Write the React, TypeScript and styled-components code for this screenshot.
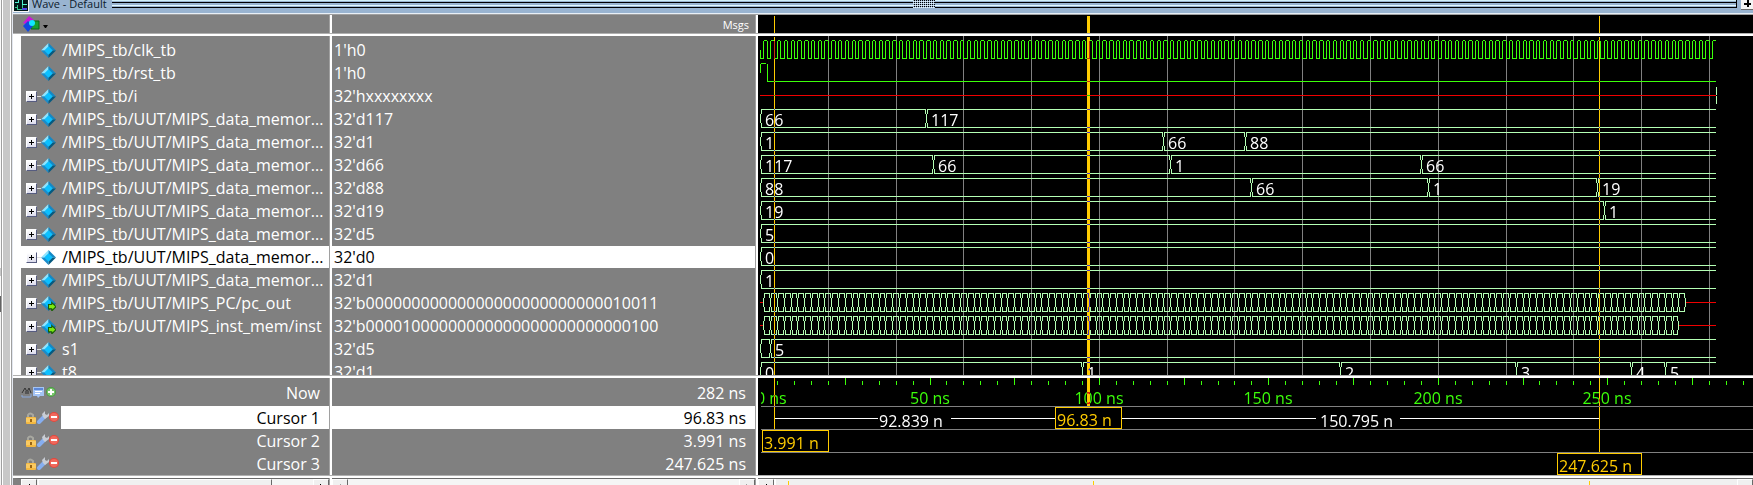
import React from "react";
import styled, { createGlobalStyle } from "styled-components";

const GREEN = "#3cff0a";
const BUS = "#b4ffb4";
const AMBER = "#ffcc00";
const GREY = "#808080";
const FONT = '"Open Sans", "Noto Sans", sans-serif';

const GlobalStyle = createGlobalStyle`
  * { box-sizing: border-box; }
  body { margin: 0; background: #fff; font-family: ${FONT}; }
  button { flex: none; font: inherit; padding: 0; border: 0; background: none; display: flex; align-items: center; justify-content: center; }
  svg { flex: none; }
  ul { margin: 0; padding: 0; list-style: none; }
`;

/* ---------- data ---------- */

type Change = [time: number, value: string];
type Signal = {
  name: string;
  value: string;
  kind: "clock" | "reset" | "unknown" | "bus" | "stream";
  leaf?: boolean;
  port?: boolean;
  selected?: boolean;
  changes?: Change[];
  until?: number;
};

const memory = "/MIPS_tb/UUT/MIPS_data_memor...";

const signals: Signal[] = [
  { name: "/MIPS_tb/clk_tb", value: "1'h0", kind: "clock", leaf: true },
  { name: "/MIPS_tb/rst_tb", value: "1'h0", kind: "reset", leaf: true },
  { name: "/MIPS_tb/i", value: "32'hxxxxxxxx", kind: "unknown" },
  { name: memory, value: "32'd117", kind: "bus", changes: [[0, "66"], [49, "117"]] },
  { name: memory, value: "32'd1", kind: "bus", changes: [[0, "1"], [119, "66"], [143, "88"]] },
  { name: memory, value: "32'd66", kind: "bus", changes: [[0, "117"], [51, "66"], [121, "1"], [195, "66"]] },
  { name: memory, value: "32'd88", kind: "bus", changes: [[0, "88"], [145, "66"], [197, "1"], [247, "19"]] },
  { name: memory, value: "32'd19", kind: "bus", changes: [[0, "19"], [249, "1"]] },
  { name: memory, value: "32'd5", kind: "bus", changes: [[0, "5"]] },
  { name: memory, value: "32'd0", kind: "bus", selected: true, changes: [[0, "0"]] },
  { name: memory, value: "32'd1", kind: "bus", changes: [[0, "1"]] },
  { name: "/MIPS_tb/UUT/MIPS_PC/pc_out", value: "32'b00000000000000000000000000010011", kind: "stream", port: true, until: 273 },
  { name: "/MIPS_tb/UUT/MIPS_inst_mem/inst", value: "32'b00001000000000000000000000000100", kind: "stream", port: true, until: 271 },
  { name: "s1", value: "32'd5", kind: "bus", changes: [[0, ""], [3, "5"]] },
  { name: "t8", value: "32'd1", kind: "bus", changes: [[0, "0"], [95, "1"], [171, "2"], [223, "3"], [257, "4"], [267, "5"]] },
];

const cursors = [
  { name: "Cursor 1", value: "96.83 ns", selected: true },
  { name: "Cursor 2", value: "3.991 ns", selected: false },
  { name: "Cursor 3", value: "247.625 ns", selected: false },
];

const END = 282;
const ROW = 23;
const toX = (ns: number) => Math.floor(2.6 + ns * 3.3885);

/* One-pixel horizontal and vertical runs, as filled path segments. */
const across = (x: number, y: number, w: number) => `M${x} ${y}h${w}v1h${-w}z`;
const down = (x: number, y: number, h: number) => `M${x} ${y}h1v${h}h-1z`;

/* ---------- layout ---------- */

const Screen = styled.div`
  display: flex;
  height: 100vh;
  overflow: hidden;
`;

const Gutter = styled.div`
  flex: 0 0 13px;
  display: grid;
  grid-template-columns: 1px 1px 1px 7px 1px 1px 1px;
`;
const Stripe = styled.div<{ $tone: string }>`
  background: ${(p) => p.$tone};
`;
const Neighbour = styled.div`
  display: flex;
  flex-direction: column;
  background: #f4f4f4;
`;
const NeighbourPart = styled.div<{ $size: number; $tone: string }>`
  flex: 0 0 ${(p) => p.$size}px;
  background: ${(p) => p.$tone};
`;

const Window = styled.main`
  flex: 1;
  min-width: 0;
  display: flex;
  flex-direction: column;
`;

const TitleBar = styled.header`
  flex: 0 0 15px;
  display: flex;
  align-items: flex-start;
  background: #99b4d1;
  border-bottom: 1px solid #a0a0a0;
  box-shadow: inset 0 -1px #e8f0f8;
  overflow: hidden;
`;
const Title = styled.h1`
  margin: 0 6px 0 3px;
  width: 74px;
  height: 13px;
  font-size: 11px;
  font-weight: 400;
  line-height: 7px;
  color: #0c1a2c;
  white-space: nowrap;
`;
const Grip = styled.div`
  flex: 1;
  height: 8px;
  background: linear-gradient(
    #d2f0f8 0 1px, #99b4d1 1px 2px, #000 2px 3px, #99b4d1 3px 5px,
    #e4fbff 5px 6px, #99b4d1 6px 7px, #000 7px 8px
  );
  border-right: 1px solid #000;
  display: flex;
  justify-content: center;
`;
const GripDots = styled.div`
  width: 22px;
  height: 8px;
  background: conic-gradient(#000 25%, #b4cce4 0 50%, #e4f4fc 0 75%, #99b4d1 0) 0 0 / 2px 2px;
`;
const PlusButton = styled.button`
  width: 12px;
  height: 10px;
  margin-left: 4px;
  background: #f4f4f4 !important;
  border-bottom: 1px solid #696969 !important;
`;

const Columns = styled.div<{ $grow?: boolean; $size?: number }>`
  flex: ${(p) => (p.$grow ? "1 1 0" : `0 0 ${p.$size}px`)};
  min-height: 0;
  display: grid;
  grid-template-columns: 316px 3px 423px 3px minmax(0, 1fr);
  grid-template-rows: minmax(0, 1fr);
  overflow: hidden;
`;
const Sash = styled.div`
  background: linear-gradient(to right, #a0a0a0 0 1px, #fff 1px 3px);
`;
const Splitter = styled.div`
  flex: 0 0 3px;
  background: linear-gradient(#b0b0b0 0 1px, #fff 1px 3px);
`;
const Pane = styled.section<{ $indent?: boolean }>`
  background: ${GREY};
  overflow: hidden;
  border-left: ${(p) => (p.$indent ? "8px solid #fff" : "0")};
`;
const ListPane = styled(Pane)`
  padding-top: 3px;
`;
const Plot = styled.div`
  background: #000;
  overflow: hidden;
  isolation: isolate;
`;
const Drawing = styled.svg`
  display: block;
  font-family: ${FONT};
  font-size: 16px;
`;
const CursorBar = styled.rect`
  mix-blend-mode: difference;
`;

const HeaderNames = styled(Pane)`
  display: flex;
  align-items: center;
  padding-left: 10px;
`;
const HeaderMessages = styled(Pane)`
  text-align: right;
  padding-right: 6px;
  font-size: 11px;
  line-height: 20px;
  color: #fff;
`;

const SignalRow = styled.li<{ $selected?: boolean }>`
  display: flex;
  align-items: center;
  height: ${ROW}px;
  padding-left: 5px;
  border-bottom: 1px solid ${GREY};
  background: ${(p) => (p.$selected ? "#fff" : GREY)};
  color: ${(p) => (p.$selected ? "#000" : "#fff")};
`;
const ToggleSlot = styled.div`
  width: 15px;
  height: 11px;
  display: flex;
  align-items: center;
`;
const Toggle = styled.button`
  width: 11px;
  height: 11px;
  background: linear-gradient(#fff, #dcdcec) !important;
  border: 1px solid #fff !important;
  border-right-color: #565c80 !important;
  border-bottom-color: #565c80 !important;
`;
const Branch = styled.div`
  flex: 1;
  height: 1px;
  background: #dcdcdc;
`;
const SignalName = styled.span`
  flex: 1;
  margin-left: 6px;
  font-size: 16px;
  line-height: 22px;
  white-space: nowrap;
`;
const ValueRow = styled.li<{ $selected?: boolean }>`
  height: ${ROW}px;
  padding-left: 2px;
  border-bottom: 1px solid ${GREY};
  background: ${(p) => (p.$selected ? "#fff" : GREY)};
  color: ${(p) => (p.$selected ? "#000" : "#fff")};
  font-size: 16px;
  line-height: 22px;
  white-space: nowrap;
`;

const FooterRow = styled.div<{ $size: number }>`
  display: flex;
  align-items: center;
  height: ${(p) => p.$size}px;
`;
const Tools = styled.div<{ $now?: boolean }>`
  width: 48px;
  padding-left: ${(p) => (p.$now ? 8 : 11)}px;
  display: flex;
`;
const FooterText = styled.div<{ $selected?: boolean }>`
  flex: 1;
  align-self: stretch;
  display: flex;
  align-items: center;
  justify-content: flex-end;
  padding: 1px 9px 0;
  background: ${(p) => (p.$selected ? "#fff" : GREY)};
  color: ${(p) => (p.$selected ? "#000" : "#fff")};
  font-size: 16px;
  line-height: 22px;
`;

const ScrollBar = styled.div<{ $inset?: boolean }>`
  display: flex;
  border-top: 1px solid #696969;
  border-left: ${(p) => (p.$inset ? `8px solid ${GREY}` : "0")};
  background: #f5f5f5;
  overflow: hidden;
`;
const ScrollButton = styled.button`
  width: 16px;
  height: 17px;
  background: #f0f0f0 !important;
  border: 1px solid #fff !important;
  border-right: 1px solid #696969 !important;
`;
const Thumb = styled.div<{ $width: number }>`
  width: ${(p) => p.$width}px;
  height: 17px;
  margin-left: 1px;
  background: #f0f0f0;
  border: 1px solid #fff;
  border-right: 1px solid #696969;
`;
const Track = styled.div`
  flex: 1;
  height: 17px;
`;
const Overview = styled.div`
  flex: 1;
  min-width: 0;
  background: #f0f0f0;
  border-left: 2px solid #fff;
  overflow: hidden;
`;

/* ---------- icons ---------- */

const Diamond = ({ port }: { port?: boolean }) => (
  <svg width="15" height="15" viewBox="0 0 14 14" aria-hidden="true">
    <path d="M7 0 0 7h7z" fill="#8fe4ff" />
    <path d="M7 0l7 7H7z" fill="#1488c4" />
    <path d="M0 7l7 7V7z" fill="#1a8ccc" />
    <path d="M14 7l-7 7V7z" fill="#065a80" />
    <path d="M7 3l4 4-4 4-4-4z" fill="#0cc0ff" />
    {port && <path d="M7 8h3V6l4 4-4 4v-2H7z" fill="#7bea10" stroke="#185c08" strokeWidth="1" />}
  </svg>
);

const Plus = () => (
  <svg width="5" height="5" viewBox="0 0 5 5" shapeRendering="crispEdges" aria-hidden="true">
    <path d="M0 2h5v1H0zM2 0h1v5H2z" fill="#000" />
  </svg>
);

const BoldPlus = () => (
  <svg width="9" height="9" viewBox="0 0 9 9" shapeRendering="crispEdges" aria-hidden="true">
    <path d="M1 3h7v2H1zM4 0h2v7H4z" fill="#000" />
  </svg>
);

const WindowIcon = () => (
  <svg width="16" height="12" viewBox="0 0 16 12" shapeRendering="crispEdges" aria-hidden="true">
    <path d="M0 0h16v12H0z" fill="#f4f4f4" />
    <path d="M1 0h14v11H1z" fill="#001818" />
    <path d="M2 2h3v1H2zM5 0h1v3H5zM9 0h1v4h4v1H9z" fill="#50f0d0" />
    <path d="M2 7h2v1H2zM4 5h1v5H4zM5 9h4v1H5zM9 5h1v5H9z" fill="#38c890" />
    <path d="M9 8h5v2h-5z" fill="#5048e8" />
  </svg>
);

const ShapesIcon = () => (
  <svg width="32" height="17" viewBox="0 0 32 17" aria-hidden="true">
    <path d="M0 7 6 0l5 4-5 5z" fill="#c818d8" />
    <path d="M8 5h8v8H8z" fill="#18a030" stroke="#0a6418" />
    <path d="M5 5l5 5-5 6-5-6z" fill="#1248e0" />
    <circle cx="9" cy="7" r="3" fill="#10e8ff" />
    <path d="M20 9h5l-2 3h-1z" fill="#000" />
  </svg>
);

const LockIcon = () => (
  <svg width="13" height="13" viewBox="0 0 13 13" aria-hidden="true">
    <path d="M4 6V4q2-3 5 0v2" fill="none" stroke="#a8a8a0" strokeWidth="2" />
    <rect x="2" y="6" width="10" height="7" rx="1" fill="#f4b840" />
    <path d="M2 8h10M2 10h10" stroke="#ffdc84" />
    <path d="M6 8h2v3H6z" fill="#986414" />
  </svg>
);
const WrenchIcon = () => (
  <svg width="12" height="13" viewBox="0 0 12 13" aria-hidden="true">
    <path d="M2 11l5-5" stroke="#86aef0" strokeWidth="4" strokeLinecap="round" />
    <path d="M6 6 5 3l3-3v3l2 1 2-2v3L8 8z" fill="#c8ccd4" />
  </svg>
);
const RemoveIcon = () => (
  <svg width="11" height="12" viewBox="0 0 11 12" aria-hidden="true">
    <circle cx="5" cy="5" r="5" fill="#e4483c" />
    <circle cx="5" cy="5" r="4" fill="#f0685c" />
    <path d="M2 4h6v2H2z" fill="#fff" />
  </svg>
);
const GridIcon = () => (
  <svg width="12" height="11" viewBox="0 0 12 11" aria-hidden="true">
    <path d="M1 6l3-5 2 4 2-4 2 5" fill="none" stroke="#333" strokeWidth="1" />
    <path d="M4 4h4v3H4z" fill="#555" />
    <path d="M1 8v2h9V7" fill="none" stroke="#88a8dc" />
  </svg>
);
const SheetIcon = () => (
  <svg width="13" height="11" viewBox="0 0 13 11" aria-hidden="true">
    <path d="M0 0h11v9H7l-2 2-1-2H0z" fill="#a4c4f4" />
    <path d="M1 1h9v2H1z" fill="#5c88d8" />
    <path d="M2 4h7v1H2zM2 6h5v1H2z" fill="#fff" />
  </svg>
);
const AddIcon = () => (
  <svg width="11" height="11" viewBox="0 0 11 11" aria-hidden="true">
    <circle cx="5" cy="5" r="5" fill="#4c9c44" />
    <circle cx="5" cy="5" r="4" fill="#78c46c" />
    <path d="M4 2h2v2h2v2H6v2H4V6H2V4h2z" fill="#fff" />
  </svg>
);
const Arrow = ({ left, muted }: { left?: boolean; muted?: boolean }) => (
  <svg width="8" height="9" viewBox="0 0 8 9" shapeRendering="crispEdges" aria-hidden="true">
    <path d={left ? "M5 1v7L1 4z" : "M3 1v7l4-4z"} fill={muted ? "#a0a0a0" : "#000"} />
  </svg>
);

/* ---------- waveforms ---------- */

const clockPath = (t: number) => {
  let d = down(toX(0), t + 11, 8);
  for (let ns = 0; ns < END; ns += 2) {
    const low = toX(ns);
    const rise = toX(ns + 1);
    const fall = toX(ns + 2);
    d += across(low, t + 19, rise - low + 1);
    d += down(rise, t + 2, 17);
    d += across(rise + 1, t + 1, fall - rise - 1);
    if (ns + 2 < END) d += down(fall, t + 2, 17);
  }
  return d;
};

const resetPath = (t: number) =>
  down(toX(0), t + 2, 9) +
  across(toX(0) + 1, t + 1, 5) +
  down(toX(2), t + 2, 18) +
  across(toX(2), t + 19, toX(END) - toX(2));

const edge = (x: number, t: number, left: boolean, right: boolean) => {
  let d = down(x, t + 6, 9);
  if (left) d += down(x - 1, t + 1, 5) + down(x - 1, t + 15, 5);
  if (right) d += down(x + 1, t + 1, 5) + down(x + 1, t + 15, 5);
  return d;
};

const busPath = (t: number, times: number[], end: number, closed: boolean) => {
  let d = "";
  times.forEach((ns, i) => {
    const from = toX(ns);
    const last = i === times.length - 1;
    const to = last ? toX(end) : toX(times[i + 1]);
    d += edge(from, t, i > 0, true);
    d += across(from + 1, t + 1, to - from - 1) + across(from + 1, t + 19, to - from - 1);
  });
  if (closed) d += edge(toX(end), t, true, false);
  return d;
};

const Wave = ({ signal, t }: { signal: Signal; t: number }) => {
  if (signal.kind === "clock") return <path d={clockPath(t)} fill={GREEN} />;
  if (signal.kind === "reset") return <path d={resetPath(t)} fill={GREEN} />;
  if (signal.kind === "unknown")
    return (
      <g>
        <path d={across(toX(0), t + 10, toX(END) - toX(0))} fill="#f00000" />
        <path d={down(toX(END), t + 2, 8) + down(toX(END), t + 11, 8)} fill={BUS} />
      </g>
    );
  if (signal.kind === "stream") {
    const until = signal.until ?? END;
    const times: number[] = [];
    for (let ns = 1; ns < until; ns += 2) times.push(ns);
    return (
      <g>
        <path
          d={across(toX(0), t + 10, 3) + across(toX(until), t + 10, toX(END) - toX(until))}
          fill="#f00000"
        />
        <path d={busPath(t, times, until, true)} fill={BUS} />
      </g>
    );
  }
  const changes = signal.changes ?? [];
  return (
    <g>
      <path d={busPath(t, changes.map((c) => c[0]), END, false)} fill={BUS} />
      {changes.map(([ns, label]) => (
        <text key={ns} x={toX(ns) + 5} y={t + 18} fill="#fff">
          {label}
        </text>
      ))}
    </g>
  );
};

const bars = [
  { x: 16, w: 1, foot: 51 },
  { x: 329, w: 3, foot: 28 },
  { x: 841, w: 1, foot: 74 },
];
const Bars = ({ y, height }: { y: number; height?: number }) => (
  <g>
    {bars.map((b) => (
      <CursorBar key={b.x} x={b.x} y={y} width={b.w} height={height ?? b.foot} fill={AMBER} />
    ))}
  </g>
);

const WaveDrawing = () => (
  <Drawing width="100%" height={signals.length * ROW + 3} shapeRendering="crispEdges" role="img" aria-label="Waveforms">
    {Array.from({ length: 14 }, (_, i) => (
      <rect key={i} x={toX((i + 1) * 20)} y="0" width="1" height="348" fill={GREY} />
    ))}
    {signals.map((s, i) => (
      <Wave key={i} signal={s} t={3 + i * ROW} />
    ))}
    <Bars y={1} height={347} />
  </Drawing>
);

const tickPath = () => {
  let d = "";
  for (let ns = 5; ns <= 290; ns += 5) d += ns % 25 === 0 ? down(toX(ns), 0, 7) : down(toX(ns), 3, 4);
  return d;
};

const Tag = ({ x, y, w, label }: { x: number; y: number; w: number; label: string }) => (
  <g>
    <rect x={x} y={y} width={w} height="22" fill={AMBER} />
    <rect x={x + 1} y={y + 1} width={w - 2} height="20" fill="#000" />
    <text x={x + 2} y={y + 19} fill={AMBER}>
      {label}
    </text>
  </g>
);

const TimelineDrawing = () => (
  <Drawing width="100%" height="97" shapeRendering="crispEdges" role="img" aria-label="Timeline and cursors">
    <path d={tickPath()} fill={GREEN} />
    <svg x="3" y="0" width="100%" height="97">
      <text x="-5" y="26" fill={GREEN}>
        0 ns
      </text>
    </svg>
    {[50, 100, 150, 200, 250].map((ns) => (
      <text key={ns} x={toX(ns)} y="26" textAnchor="middle" fill={GREEN}>
        {ns} ns
      </text>
    ))}
    {[28, 51, 74].map((y) => (
      <rect key={y} x="3" y={y} width="100%" height="1" fill={GREY} />
    ))}
    <path d={across(17, 40, 103) + across(193, 40, 104) + across(364, 40, 194) + across(642, 40, 199)} fill="#fff" />
    <text x="121" y="49" fill="#fff">
      92.839 n
    </text>
    <text x="562" y="49" fill="#fff">
      150.795 n
    </text>
    <Bars y={0} />
    <Tag x={297} y={29} w={67} label="96.83 n" />
    <Tag x={4} y={52} w={67} label="3.991 n" />
    <Tag x={799} y={75} w={85} label="247.625 n" />
  </Drawing>
);

/* ---------- page ---------- */

export default function App() {
  return (
    <Screen>
      <GlobalStyle />
      <Gutter>
        <Neighbour>
          <NeighbourPart $size={268} $tone="#fafafa" />
          <NeighbourPart $size={8} $tone="#c8c8c8" />
          <NeighbourPart $size={20} $tone="#fafafa" />
          <NeighbourPart $size={16} $tone="#646464" />
        </Neighbour>
        <Stripe $tone="#a0a0a0" />
        <Stripe $tone="#fff" />
        <Stripe $tone="#c8c8c8" />
        <Stripe $tone="#fff" />
        <Stripe $tone="#a0a0a0" />
        <Stripe $tone="#e4e8f0" />
      </Gutter>
      <Window>
        <TitleBar>
          <WindowIcon />
          <Title>Wave - Default</Title>
          <Grip>
            <GripDots />
          </Grip>
          <PlusButton aria-label="Zoom window">
            <BoldPlus />
          </PlusButton>
        </TitleBar>

        <Columns $size={18}>
          <HeaderNames>
            <button aria-label="Signal filter">
              <ShapesIcon />
            </button>
          </HeaderNames>
          <Sash />
          <HeaderMessages>Msgs</HeaderMessages>
          <Sash />
          <Plot>
            <Drawing width="100%" height="18" shapeRendering="crispEdges" aria-hidden="true">
              <Bars y={1} height={17} />
            </Drawing>
          </Plot>
        </Columns>
        <Splitter />

        <Columns $grow>
          <ListPane $indent>
            <ul>
              {signals.map((s, i) => (
                <SignalRow key={i} $selected={s.selected}>
                  <ToggleSlot>
                    {!s.leaf && (
                      <>
                        <Toggle aria-label={`Expand ${s.name}`}>
                          <Plus />
                        </Toggle>
                        <Branch />
                      </>
                    )}
                  </ToggleSlot>
                  <Diamond port={s.port} />
                  <SignalName>{s.name}</SignalName>
                </SignalRow>
              ))}
            </ul>
          </ListPane>
          <Sash />
          <ListPane>
            <ul>
              {signals.map((s, i) => (
                <ValueRow key={i} $selected={s.selected}>
                  {s.value}
                </ValueRow>
              ))}
            </ul>
          </ListPane>
          <Sash />
          <Plot>
            <WaveDrawing />
          </Plot>
        </Columns>
        <Splitter />

        <Columns $size={97}>
          <Pane>
            <FooterRow $size={28}>
              <Tools $now>
                <button aria-label="Grid settings">
                  <GridIcon />
                </button>
                <button aria-label="Edit timeline">
                  <SheetIcon />
                </button>
                <button aria-label="Add cursor">
                  <AddIcon />
                </button>
              </Tools>
              <FooterText>Now</FooterText>
            </FooterRow>
            {cursors.map((c) => (
              <FooterRow key={c.name} $size={ROW}>
                <Tools>
                  <button aria-label={`Lock ${c.name}`}>
                    <LockIcon />
                  </button>
                  <button aria-label={`Edit ${c.name}`}>
                    <WrenchIcon />
                  </button>
                  <button aria-label={`Remove ${c.name}`}>
                    <RemoveIcon />
                  </button>
                </Tools>
                <FooterText $selected={c.selected}>{c.name}</FooterText>
              </FooterRow>
            ))}
          </Pane>
          <Sash />
          <Pane>
            <FooterRow $size={28}>
              <FooterText>282 ns</FooterText>
            </FooterRow>
            {cursors.map((c) => (
              <FooterRow key={c.name} $size={ROW}>
                <FooterText $selected={c.selected}>{c.value}</FooterText>
              </FooterRow>
            ))}
          </Pane>
          <Sash />
          <Plot>
            <TimelineDrawing />
          </Plot>
        </Columns>
        <Splitter />

        <Columns $size={7}>
          <ScrollBar $inset>
            <ScrollButton aria-label="Scroll names left">
              <Arrow left />
            </ScrollButton>
            <Thumb $width={234} />
            <Track />
            <ScrollButton aria-label="Scroll names right">
              <Arrow />
            </ScrollButton>
          </ScrollBar>
          <Sash />
          <ScrollBar>
            <ScrollButton aria-label="Scroll values left">
              <Arrow left muted />
            </ScrollButton>
            <Track />
            <ScrollButton aria-label="Scroll values right">
              <Arrow muted />
            </ScrollButton>
          </ScrollBar>
          <Sash />
          <ScrollBar>
            <ScrollButton aria-label="Scroll waves left">
              <Arrow left />
            </ScrollButton>
            <Overview>
              <Drawing width="100%" height="7" shapeRendering="crispEdges" aria-hidden="true">
                <path d={down(12, 2, 5) + down(317, 2, 5) + down(813, 2, 5)} fill={AMBER} />
              </Drawing>
            </Overview>
            <ScrollButton aria-label="Scroll waves right" />
          </ScrollBar>
        </Columns>
      </Window>
    </Screen>
  );
}
